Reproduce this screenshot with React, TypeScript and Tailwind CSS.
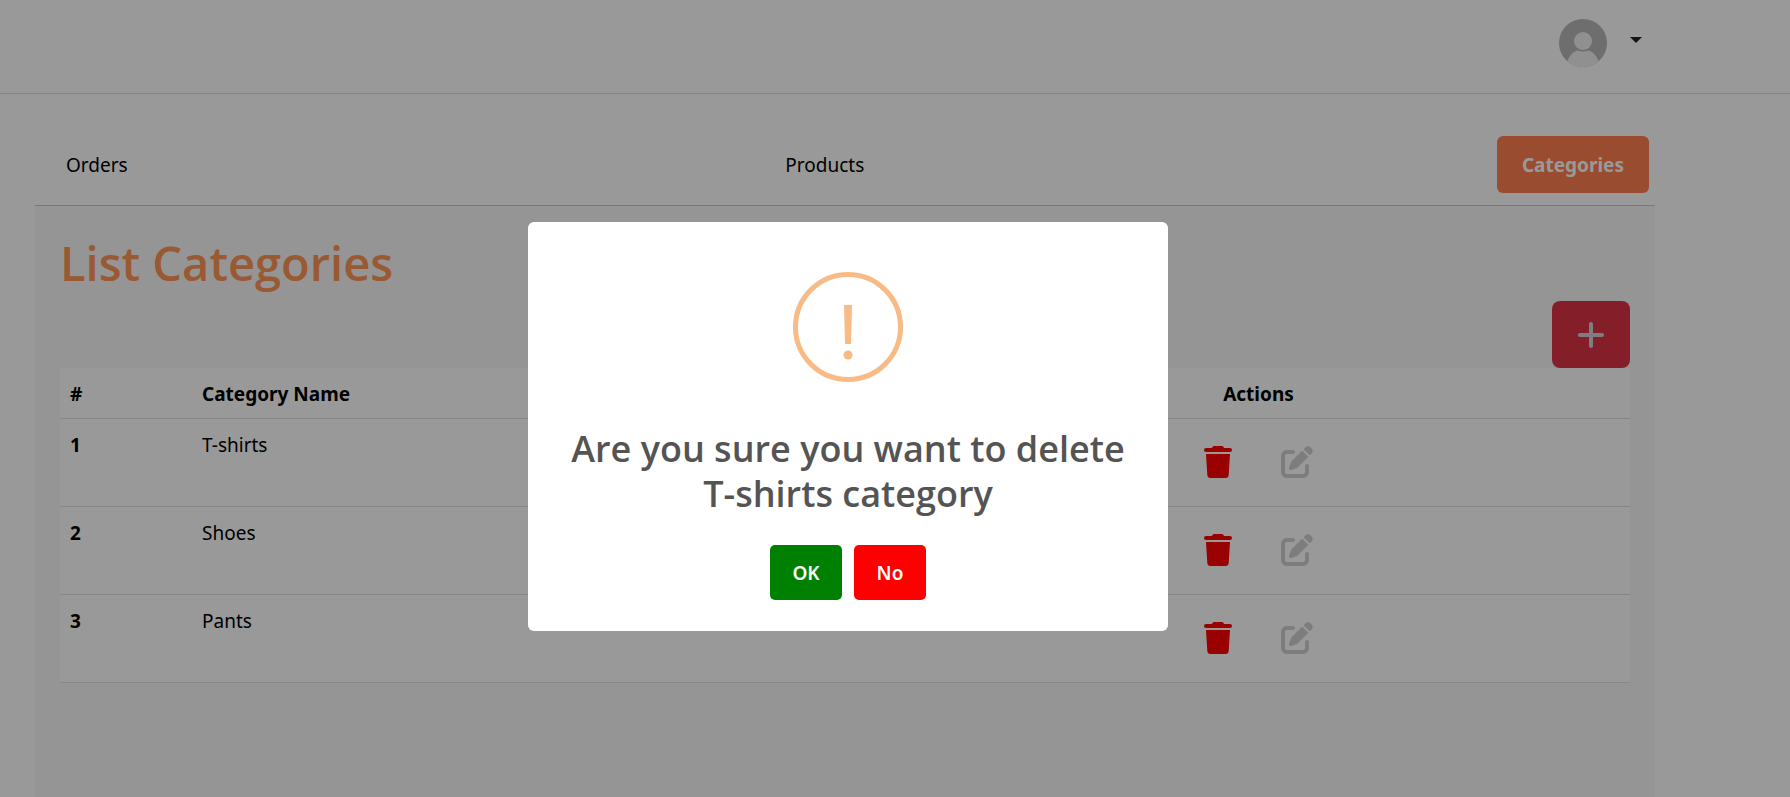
import React from "react";
import { FaPenToSquare, FaPlus, FaTrash } from "react-icons/fa6";

const categories = ["T-shirts", "Shoes", "Pants"];

function Avatar() {
  return (
    <svg viewBox="0 0 48 48" className="size-12" aria-hidden="true">
      <defs>
        <clipPath id="avatar-clip">
          <circle cx="24" cy="24" r="24" />
        </clipPath>
      </defs>
      <g clipPath="url(#avatar-clip)">
        <rect width="48" height="48" fill="#b7b7b7" />
        <path d="M7 48C8 38 15 31.5 19 31.5q5 2 10 0C33 31.5 40 38 41 48Z" fill="#f0f0f0" />
        <circle cx="24" cy="22" r="9" fill="#f0f0f0" />
      </g>
    </svg>
  );
}

function Header() {
  return (
    <header className="flex h-[94px] items-start justify-end border-b border-[#dcdcdc] pt-[19px] pr-[148px]">
      <button type="button" aria-label="Account menu" className="flex items-start gap-[23px]">
        <Avatar />
        <svg viewBox="0 0 12 6" className="mt-[18px] h-[6px] w-3" aria-hidden="true">
          <path d="M0 0h12L6 6Z" fill="#212529" />
        </svg>
      </button>
    </header>
  );
}

function Tabs() {
  return (
    <nav className="flex items-center justify-between border-b border-[#c8c8c8] px-[6px] pb-3">
      <a href="#orders" className="px-[25px] pt-[15px] pb-[13px]">Orders</a>
      <a href="#products" className="px-[25px] pt-[15px] pb-[13px]">Products</a>
      <a href="#categories" className="rounded-md bg-[#ff7f50] px-[25px] pt-[15px] pb-[13px] font-bold text-white">
        Categories
      </a>
    </nav>
  );
}

function CategoryTable() {
  return (
    <table className="w-full table-fixed border-collapse bg-white text-left">
      <colgroup>
        <col className="w-[132px]" />
        <col className="w-[695px]" />
        <col />
      </colgroup>
      <thead>
        <tr className="h-[50px] border-b border-[#dee2e6]">
          <th scope="col" className="px-[10px] pt-1 font-bold">#</th>
          <th scope="col" className="px-[10px] pt-1 font-bold">Category Name</th>
          <th scope="col" className="px-[10px] pt-1 text-center font-bold">Actions</th>
        </tr>
      </thead>
      <tbody>
        {categories.map((name, index) => (
          <tr key={name} className="h-[88px] border-b border-[#dee2e6] align-top">
            <th scope="row" className="px-[10px] pt-3 font-bold">{index + 1}</th>
            <td className="px-[10px] pt-3">{name}</td>
            <td className="px-[10px] pt-[27px]">
              <div className="flex justify-center gap-[49px]">
                <button type="button" aria-label={`Delete ${name}`} className="text-[#ff0000]">
                  <FaTrash className="h-8 w-7" />
                </button>
                <button type="button" aria-label={`Edit ${name}`} className="text-[#d0d0d3]">
                  <FaPenToSquare className="size-8" />
                </button>
              </div>
            </td>
          </tr>
        ))}
      </tbody>
    </table>
  );
}

function ConfirmDialog() {
  return (
    <div className="fixed inset-0 flex items-center justify-center bg-black/40 pt-14 pr-[94px]">
      <div
        role="dialog"
        aria-modal="true"
        aria-labelledby="confirm-title"
        className="flex w-[640px] flex-col items-center rounded-md bg-white px-5 pt-[50px] pb-[31px]"
      >
        <svg viewBox="0 0 110 110" className="size-[110px]" aria-hidden="true">
          <circle cx="55" cy="55" r="52.5" fill="none" stroke="#f8bb86" strokeWidth="5" />
          <path d="M51 33h8l-1 39h-6Z" fill="#f8bb86" />
          <circle cx="55" cy="83" r="4.5" fill="#f8bb86" />
        </svg>
        <h2
          id="confirm-title"
          className="mt-11 px-5 text-center font-['Open_Sans',sans-serif] text-[36px] leading-[45px] font-semibold text-[#545454]"
        >
          Are you sure you want to delete T-shirts category
        </h2>
        <div className="mt-[29px] flex gap-3 font-semibold text-white">
          <button type="button" className="h-[55px] w-[72px] rounded-[5px] bg-[#008000] pt-[2px]">OK</button>
          <button type="button" className="h-[55px] w-[72px] rounded-[5px] bg-[#ff0000] pt-[2px]">No</button>
        </div>
      </div>
    </div>
  );
}

export default function App() {
  return (
    <div className="flex min-h-screen flex-col bg-white font-['Noto_Sans',sans-serif] text-[19px] leading-[29px] text-black">
      <Header />
      <main className="flex grow flex-col pt-[42px] pr-[135px] pl-[35px]">
        <Tabs />
        <section className="grow bg-[#f8f8f8] px-[25px] pt-7">
          <h1 className="font-['Open_Sans',sans-serif] text-[47px] leading-[58px] font-semibold text-[#ff9554]">
            List Categories
          </h1>
          <div className="mt-[9px] flex justify-end">
            <button
              type="button"
              aria-label="Add category"
              className="flex h-[67px] w-[78px] items-center justify-center rounded-lg bg-[#dc3545] text-[#d3d3d6]"
            >
              <FaPlus className="size-8" />
            </button>
          </div>
          <CategoryTable />
        </section>
      </main>
      <ConfirmDialog />
    </div>
  );
}
